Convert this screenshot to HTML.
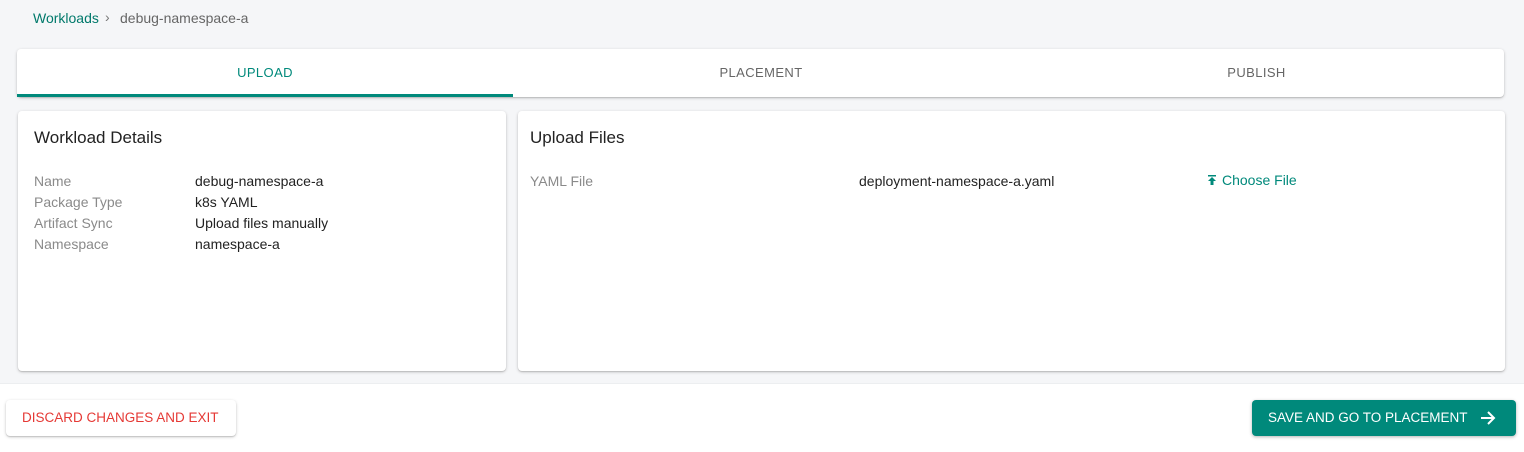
<!DOCTYPE html>
<html><head><style>
*{box-sizing:border-box;margin:0;padding:0}
body{width:1524px;height:452px;background:#f5f6f8;font-family:"Liberation Sans",sans-serif;position:relative;overflow:hidden}
.abs{position:absolute}
.card{background:#fff;border-radius:4px;box-shadow:0 1px 3px rgba(0,0,0,.2),0 1px 1px rgba(0,0,0,.12)}
.tab{position:absolute;top:0;height:48px;line-height:48px;text-align:center;font-size:13px;color:#666;letter-spacing:.4px}
.lbl{position:absolute;font-size:14px;color:#8a8a8a}
.val{position:absolute;font-size:14px;color:#222}
h3{position:absolute;font-weight:normal;font-size:17px;color:#222}
.btn{position:absolute;height:36px;border-radius:4px;font-size:13.5px;letter-spacing:0;line-height:36px}
</style></head><body>
<div class="abs" style="left:33px;top:10px;font-size:14px;color:#00796b">Workloads</div>
<div class="abs" style="left:105px;top:9px;font-size:14px;color:#777">›</div>
<div class="abs" style="left:120px;top:10px;font-size:14px;color:#666">debug-namespace-a</div>

<div class="card abs" style="left:17px;top:49px;width:1487px;height:48px">
 <div class="tab" style="left:0;width:496px;color:#00897b">UPLOAD</div>
 <div class="tab" style="left:496px;width:496px">PLACEMENT</div>
 <div class="tab" style="left:992px;width:495px">PUBLISH</div>
 <div class="abs" style="left:0;top:45px;width:496px;height:3px;background:#00897b"></div>
</div>

<div class="card abs" style="left:18px;top:111px;width:488px;height:260px">
 <h3 style="left:16px;top:17px">Workload Details</h3>
 <div class="lbl" style="left:16px;top:62px">Name</div><div class="val" style="left:177px;top:62px">debug-namespace-a</div>
 <div class="lbl" style="left:16px;top:83px">Package Type</div><div class="val" style="left:177px;top:83px">k8s YAML</div>
 <div class="lbl" style="left:16px;top:104px">Artifact Sync</div><div class="val" style="left:177px;top:104px">Upload files manually</div>
 <div class="lbl" style="left:16px;top:125px">Namespace</div><div class="val" style="left:177px;top:125px">namespace-a</div>
</div>

<div class="card abs" style="left:518px;top:111px;width:987px;height:260px">
 <h3 style="left:12px;top:17px">Upload Files</h3>
 <div class="lbl" style="left:12px;top:62px">YAML File</div>
 <div class="val" style="left:341px;top:62px">deployment-namespace-a.yaml</div>
 <svg class="abs" style="left:688px;top:63px" width="12" height="12" viewBox="0 0 12 12"><rect x="2" y="1" width="8" height="1.5" fill="#00897b"/><path d="M6 3 L10 7 H7.5 V11 H4.5 V7 H2 Z" fill="#00897b"/></svg>
 <div class="abs" style="left:704px;top:61px;font-size:14px;color:#00897b">Choose File</div>
</div>

<div class="abs" style="left:0;top:383px;width:1524px;height:69px;background:#fff;border-top:1px solid #eceef0"></div>
<div class="btn card" style="left:6px;top:400px;width:230px;color:#e53935;background:#fff;padding-left:16px">DISCARD CHANGES AND EXIT</div>
<div class="btn" style="left:1252px;top:400px;width:264px;background:#00897b;color:#fff;box-shadow:0 1px 3px rgba(0,0,0,.3);padding-left:16px">SAVE AND GO TO PLACEMENT
 <svg class="abs" style="left:227px;top:9px" width="18" height="18" viewBox="0 0 18 18"><path d="M2 9 H15 M9 3 L15 9 L9 15" stroke="#fff" stroke-width="2" fill="none"/></svg>
</div>
</body></html>
